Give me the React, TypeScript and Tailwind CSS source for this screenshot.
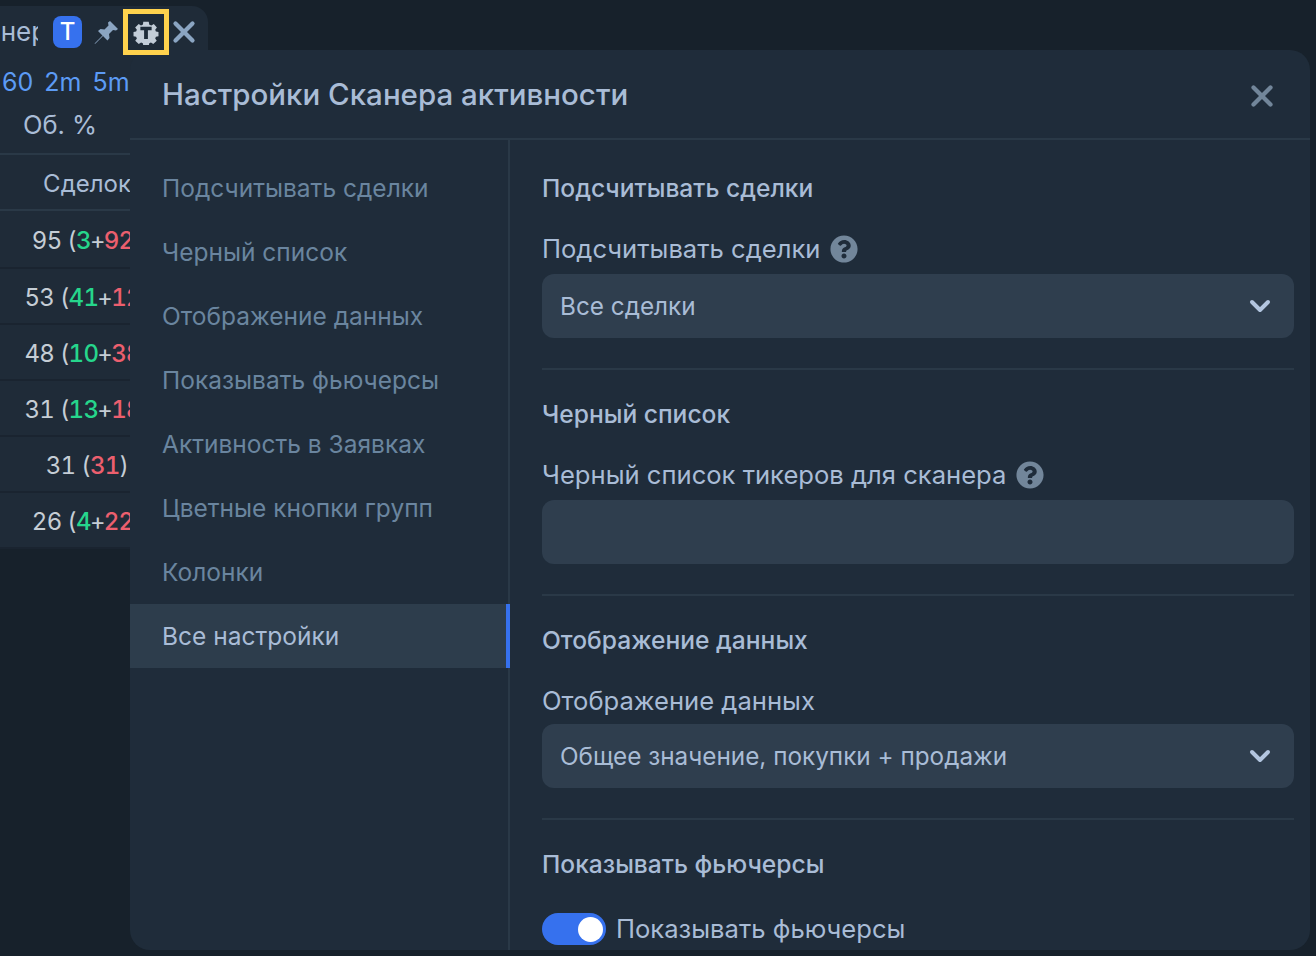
import { X, ChevronDown } from 'lucide-react';
import { FaQuestionCircle } from 'react-icons/fa';

const menuItems = [
  'Подсчитывать сделки',
  'Черный список',
  'Отображение данных',
  'Показывать фьючерсы',
  'Активность в Заявках',
  'Цветные кнопки групп',
  'Колонки',
  'Все настройки',
];

const rows = [
  { total: '95', buy: '3', sell: '92' },
  { total: '53', buy: '41', sell: '12' },
  { total: '48', buy: '10', sell: '38' },
  { total: '31', buy: '13', sell: '18' },
  { total: '31', buy: '', sell: '31' },
  { total: '26', buy: '4', sell: '22' },
];

const GearIcon = () => (
  <svg viewBox="0 0 30 30" className="h-[26px] w-[26px]">
    <path
      fill="#c3cdd8"
      d="M11.500 2h7l.8 3.600 2.600 1.100 3.100-2 4 4.600-2.200 2.900.9 2.300 3.300.5v5.500l-3.300.6-.9 2.300 2 2.900-4.500 4.200-2.900-2-2.200 1-.6 2.900h-7l-.7-3-2.200-1-3 2-4.500-4.200 2.100-2.900-1-2.300-3.300-.6v-5.500l3.300-.5 1-2.300-2.200-2.900 4.500-4.600 3 2 2.500-1.100z"
      transform="translate(1.500 1.500) scale(.9)"
    />
    <path fill="#1f2c3a" d="M8.500 9h13v4h-4.300v10h-4.400V13H8.500z" />
  </svg>
);

const PinIcon = () => (
  <svg viewBox="0 0 25 25" className="ml-[12px] h-[25px] w-[25px] translate-y-px text-[#8ba5c2]">
    <path
      fill="currentColor"
      d="M16 1l8 8-2 1.500-3-.5-4 4 .5 4-2 2.500L9 16l-7.500 7.500-1 .5.5-1L8.500 15.500 4 11l2.500-2 4 .5 4-4-.5-3z"
    />
  </svg>
);

const Help = () => <FaQuestionCircle className="h-[28px] w-[28px] text-[#72869a]" />;

const Select = ({ value }: { value: string }) => (
  <div className="flex h-16 items-center justify-between rounded-xl bg-[#2f3e4e] pl-[18px] pr-[18px] text-[24.3px] text-[#a9bcd6]">
    <span>{value}</span>
    <ChevronDown className="h-8 w-8 text-[#b3c6e0]" strokeWidth={3} />
  </div>
);

const SectionTitle = ({ children }: { children: string }) => (
  <h3 className="text-[24.6px] font-medium leading-8 text-[#a9bcd6]">{children}</h3>
);

const Label = ({ children, help }: { children: string; help?: boolean }) => (
  <div className="flex h-8 items-center gap-[10px] text-[25.6px] text-[#a9bcd6]">
    <span>{children}</span>
    {help && <Help />}
  </div>
);

const Divider = () => <div className="h-0.5 bg-[#2a3947]" />;

export default function App() {
  return (
    <div className="relative h-[956px] w-[1316px] overflow-hidden bg-[#17212b] font-['Inter',sans-serif]">
      {/* scanner widget behind the dialog */}
      <div className="w-[208px] pt-1.5">
        <div className="flex h-[50px] items-center rounded-tr-2xl bg-[#1f2b38]">
          <div className="w-[38px] overflow-hidden whitespace-nowrap text-[26px] text-[#a9bcd6]">
            <span className="-ml-[47px] inline-block">Сканер</span>
          </div>
          <div className="ml-[15px] flex h-8 w-[29px] translate-y-px items-center justify-center rounded-lg bg-[#3671ee] text-[24px] font-medium text-white">
            T
          </div>
          <PinIcon />
          <div className="relative z-10 ml-1 flex h-[46px] w-[46px] translate-y-px items-center justify-center border-[5px] border-[#ffd24d] bg-[#1f2b38]">
            <GearIcon />
          </div>
          <X className="-ml-0.5 h-[34px] w-[34px] translate-y-px text-[#8ba5c2]" strokeWidth={3} />
        </div>
      </div>

      <div className="w-[174px] bg-[#1f2b38]">
        <div className="flex h-[47px] items-center gap-[11px] pl-[2px] pt-1.5 text-[25px] text-[#5c9bf5]">
          <span>60</span>
          <span>2m</span>
          <span>5m</span>
        </div>
        <div className="flex h-[50px] w-[120px] items-center justify-center pb-1.5 text-[25.500px] text-[#a9bcd6]">Об. %</div>
        <div className="h-[2px] bg-[#2a3947]" />
        <div className="flex h-[56px] items-center justify-center border-b-2 border-[#2a3947] pt-[3px] text-[24px] text-[#a9bcd6]">
          Сделок
        </div>
        {rows.map((row, i) => (
          <div
            key={i}
            className={
              i === 0
                ? 'flex h-[58px] items-center justify-center whitespace-nowrap border-b-2 border-[#1a2430] pt-1 text-[24px] tracking-[-0.7px] tabular-nums text-[#c5cdd5]'
                : 'flex h-14 items-center justify-center whitespace-nowrap border-b-2 border-[#1a2430] pt-1 text-[24px] tracking-[-0.7px] tabular-nums text-[#c5cdd5]'
            }
          >
            <span>
              {row.total} (
              {row.buy && <span className="font-medium text-[#26d68c]">{row.buy}</span>}
              {row.buy && <span className="-mx-px">+</span>}
              <span className="font-medium text-[#ec5f6e]">{row.sell}</span>)
            </span>
          </div>
        ))}
      </div>

      {/* settings dialog */}
      <div className="absolute left-[130px] top-[50px] flex h-[900px] w-[1180px] flex-col overflow-hidden rounded-[20px] bg-[#1f2c3a]">
        <div className="flex h-[90px] shrink-0 items-center justify-between border-b-2 border-[#2a3947] pl-8 pr-[31px]">
          <h2 className="text-[29.500px] font-medium text-[#a9bcd6]">Настройки Сканера активности</h2>
          <X className="h-[34px] w-[34px] translate-y-0.5 text-[#72869a]" strokeWidth={3} />
        </div>
        <div className="flex min-h-0 flex-1">
          <nav className="w-[380px] shrink-0 border-r-2 border-[#2a3947] pt-4">
            {menuItems.map((item, i) => {
              const active = i === menuItems.length - 1;
              return (
                <div
                  key={item}
                  className={
                    active
                      ? 'flex h-16 w-[380px] items-center border-r-4 border-[#3671ee] bg-[#2d3d4c] pl-8 text-[24.500px] text-[#a9bcd6]'
                      : 'flex h-16 items-center pl-8 text-[24.500px] text-[#6a859f]'
                  }
                >
                  {item}
                </div>
              );
            })}
          </nav>
          <div className="min-w-0 flex-1 overflow-hidden pl-8 pr-4 pt-8">
            <SectionTitle>Подсчитывать сделки</SectionTitle>
            <div className="mt-[29px] mb-[9px]">
              <Label help>Подсчитывать сделки</Label>
            </div>
            <Select value="Все сделки" />
            <div className="mt-[30px]">
              <Divider />
            </div>
            <div className="mt-7">
              <SectionTitle>Черный список</SectionTitle>
            </div>
            <div className="mt-[29px] mb-[9px]">
              <Label help>Черный список тикеров для сканера</Label>
            </div>
            <div className="h-16 rounded-xl bg-[#2f3e4e]" />
            <div className="mt-[30px]">
              <Divider />
            </div>
            <div className="mt-7">
              <SectionTitle>Отображение данных</SectionTitle>
            </div>
            <div className="mt-[29px] mb-[7px]">
              <Label>Отображение данных</Label>
            </div>
            <Select value="Общее значение, покупки + продажи" />
            <div className="mt-[30px]">
              <Divider />
            </div>
            <div className="mt-7">
              <SectionTitle>Показывать фьючерсы</SectionTitle>
            </div>
            <div className="mt-[30px] flex items-center gap-[10px]">
              <div className="flex h-8 w-16 items-center justify-end rounded-full bg-[#3671ee] pr-[3px]">
                <div className="h-[25px] w-[25px] rounded-full bg-white" />
              </div>
              <span className="text-[25.600px] text-[#a9bcd6]">Показывать фьючерсы</span>
            </div>
          </div>
        </div>
      </div>
    </div>
  );
}
